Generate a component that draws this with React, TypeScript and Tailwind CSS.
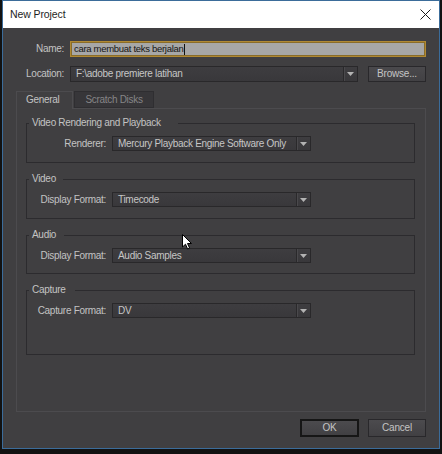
import React from 'react';

const labelCls = "text-[10px] tracking-[-0.3px] text-[#c3c3c3] leading-none";

interface SelectProps {
  value: string;
  className: string;
}

const Select: React.FC<SelectProps> = ({ value, className }) => {
  return (
    <div className={`flex border border-[#29282a] bg-gradient-to-b from-[#3e3d40] to-[#39383b] ${className}`}>
      <div className="flex-1 flex items-center pl-[5px] text-[10px] tracking-[-0.3px] text-[#c6c6c6] leading-none">{value}</div>
      <div className="w-[14px] flex items-center justify-center border-l border-[#2a292b] shadow-[inset_1px_0_0_#4a494c]">
        <svg width="7" height="4" viewBox="0 0 7 4">
          <path d="M0 0h7L3.5 4z" fill="#b3b3b3" />
        </svg>
      </div>
    </div>
  );
};

interface GroupProps {
  title: string;
  legendWidth: string;
  label: string;
  value: string;
  padBottom: string;
  first?: boolean;
}

const Group: React.FC<GroupProps> = ({ title, legendWidth, label, value, padBottom, first }) => {
  return (
    <fieldset className={`border border-[#2c2b2e] pt-[7px] ${padBottom} ${first ? 'mt-[8px]' : 'mt-[10px]'}`}>
      <legend className={`ml-[2px] pl-[3px] h-[12px] leading-[12px] text-[10px] tracking-[-0.3px] text-[#c3c3c3] ${legendWidth}`}>
        {title}
      </legend>
      <div className="flex items-center gap-[6px]">
        <span className={`w-[79px] text-right ${labelCls}`}>{label}</span>
        <Select value={value} className="w-[199px] h-[15px]" />
      </div>
    </fieldset>
  );
};

const DialogButton: React.FC<{ label: string; isDefault?: boolean }> = ({ label, isDefault }) => {
  return (
    <button
      className={`h-[18px] flex items-center justify-center bg-gradient-to-b from-[#4c4b4e] to-[#414043] text-[10px] tracking-[-0.2px] text-[#c4c4c4] leading-none ${
        isDefault ? 'w-[59px] border-2 border-[#161616]' : 'w-[58px] border border-[#29282b]'
      }`}
    >
      {label}
    </button>
  );
};

export default function App() {
  return (
    <div className="w-[442px] h-[454px] bg-[#121212] relative font-['Liberation_Sans',Arial,sans-serif] overflow-hidden">
      <div className="ml-[2px] w-[438px] h-[449px] border border-[#3b6c9a] flex flex-col">
        {/* Title bar */}
        <div className="h-[27px] bg-white flex items-center justify-between pl-[7px] pr-[8px]">
          <span className="text-[10.5px] tracking-[-0.1px] text-[#1e1e1e]">New Project</span>
          <svg width="11" height="11" viewBox="0 0 11 11">
            <path d="M0.5 0.5L10.5 10.5M10.5 0.5L0.5 10.5" stroke="#1a1a1a" strokeWidth="1" />
          </svg>
        </div>

        {/* Body */}
        <div className="flex-1 bg-[#403f41] flex flex-col pt-[13px]">
          {/* Name */}
          <div className="flex items-center gap-[6px]">
            <span className={`w-[61px] text-right ${labelCls}`}>Name:</span>
            <div className="w-[356px] h-[16px] bg-[#a7a7a7] border border-[#b08933] shadow-[inset_0_0_0_1px_#8a6d2a] flex items-center pl-[3px]">
              <span className="text-[9.5px] tracking-[-0.3px] text-[#151515] leading-none">cara membuat teks berjalan</span>
              <span className="w-px h-[11px] bg-[#111] ml-[1px]"></span>
            </div>
          </div>

          {/* Location */}
          <div className="flex items-center mt-[9px]">
            <span className={`w-[61px] text-right ${labelCls}`}>Location:</span>
            <Select value="F:\adobe premiere latihan" className="ml-[6px] w-[288px] h-[16px]" />
            <button className="ml-[10px] w-[58px] h-[16px] flex items-center justify-center bg-gradient-to-b from-[#4a494c] to-[#424144] border border-[#29282b] text-[10px] tracking-[-0.2px] text-[#c4c4c4] leading-none">
              Browse...
            </button>
          </div>

          {/* Tabs */}
          <div className="ml-[13px] mt-[9px] flex items-end">
            <div className="relative z-10 -mb-px w-[57px] h-[18px] bg-[#403f41] border-t border-l border-r border-[#4c4b4e] flex items-center pl-[9px] pb-[1px]">
              <span className={labelCls}>General</span>
            </div>
            <div className="ml-px w-[80px] h-[17px] bg-[#373639] border border-[#2f2e31] flex items-center justify-center">
              <span className="text-[10px] tracking-[-0.3px] text-[#868587] leading-none">Scratch Disks</span>
            </div>
          </div>

          {/* Panel */}
          <div className="ml-[13px] w-[410px] h-[304px] border border-[#4c4b4e] pl-[9px] pr-[10px] flex flex-col">
            <Group first title="Video Rendering and Playback" legendWidth="w-[149px]" label="Renderer:" value="Mercury Playback Engine Software Only" padBottom="pb-[11px]" />
            <Group title="Video" legendWidth="w-[34px]" label="Display Format:" value="Timecode" padBottom="pb-[11px]" />
            <Group title="Audio" legendWidth="w-[35px]" label="Display Format:" value="Audio Samples" padBottom="pb-[10px]" />
            <Group title="Capture" legendWidth="w-[46px]" label="Capture Format:" value="DV" padBottom="pb-[36px]" />
          </div>

          {/* Buttons */}
          <div className="mt-[7px] flex justify-end gap-[9px] pr-[13px]">
            <DialogButton label="OK" isDefault />
            <DialogButton label="Cancel" />
          </div>
        </div>
      </div>

      {/* Mouse pointer */}
      <svg className="absolute left-[182px] top-[234px]" width="11" height="16" viewBox="0 0 11 16">
        <path d="M0.5 0.5V13L3.5 10.2L5.6 15L7.6 14.1L5.5 9.5H9.5Z" fill="#ffffff" stroke="#000000" strokeWidth="1" strokeLinejoin="round" />
      </svg>
    </div>
  );
}
